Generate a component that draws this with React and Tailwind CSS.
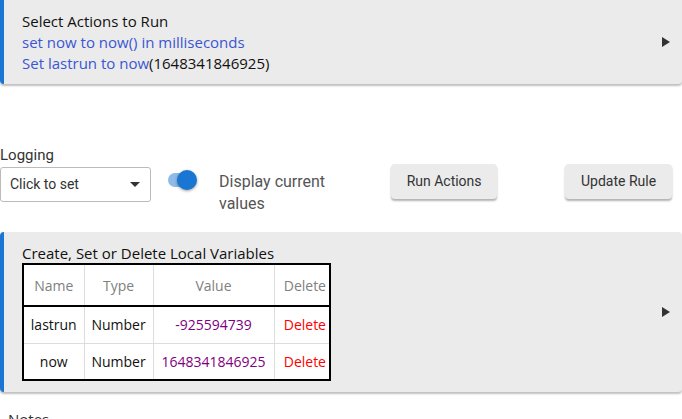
import React from "react";

function Arrow() {
  return (
    <svg width="8" height="10" viewBox="0 0 8 10" className="shrink-0">
      <path d="M0 0 L8 5 L0 10 Z" fill="#333" />
    </svg>
  );
}

const vars = [
  { name: "lastrun", type: "Number", value: "-925594739" },
  { name: "now", type: "Number", value: "1648341846925" },
];

export default function App() {
  return (
    <div className="w-[682px] h-[419px] overflow-hidden bg-white text-[#222]">
      {/* Actions panel */}
      <div className="flex items-center h-[84px] bg-[#ebebeb] rounded-b border-l-4 border-[#1976d2] shadow-[0_2px_2px_rgba(0,0,0,0.25)] pl-[18px] pr-[12px] font-['Open_Sans',sans-serif] text-[15px] leading-[21px]">
        <div className="flex-1 pt-[1px]">
          <div className="text-[#111]">Select Actions to Run</div>
          <div className="text-[#3a56d4]">set now to now() in milliseconds</div>
          <div>
            <span className="text-[#3a56d4]">Set lastrun to now</span>
            <span className="text-[#111]">(1648341846925)</span>
          </div>
        </div>
        <Arrow />
      </div>

      {/* Controls */}
      <div className="mt-[62px] flex items-start font-['Roboto',sans-serif]">
        <div className="w-[151px]">
          <div className="text-[15px] leading-[18px] text-[#333]">Logging</div>
          <div className="mt-[3px] h-[35px] border border-[#bbb] rounded-[3px] flex items-center justify-between pl-[9px] pr-[10px] text-[14px] text-[#333]">
            <span>Click to set</span>
            <svg width="10" height="5" viewBox="0 0 10 5">
              <path d="M0 0 L10 0 L5 5 Z" fill="#333" />
            </svg>
          </div>
        </div>
        <div className="ml-[17px] mt-[24px] relative w-[34px] h-[20px] flex items-center">
          <div className="w-[28px] h-[14px] rounded-full bg-[#8fb9e8]" />
          <div className="absolute left-[9px] top-0 w-[20px] h-[20px] rounded-full bg-[#1976d2] shadow-[0_1px_3px_rgba(0,0,0,0.4)]" />
        </div>
        <div className="ml-[17px] mt-[25px] text-[16px] leading-[22px] text-[#555]">
          Display current
          <br />
          values
        </div>
        <button className="ml-[66px] mt-[18px] w-[106px] h-[35px] bg-[#ebebeb] rounded text-[14px] text-[#333] shadow-[0_2px_2px_rgba(0,0,0,0.3)]">
          Run Actions
        </button>
        <button className="ml-[68px] mt-[18px] w-[107px] h-[35px] bg-[#ebebeb] rounded text-[14px] text-[#333] shadow-[0_2px_2px_rgba(0,0,0,0.3)]">
          Update Rule
        </button>
      </div>

      {/* Variables panel */}
      <div className="mt-[17px] flex items-center bg-[#ebebeb] rounded border-l-4 border-[#1976d2] shadow-[0_2px_2px_rgba(0,0,0,0.25)] pl-[18px] pr-[12px] pt-[11px] pb-[11px] font-['Open_Sans',sans-serif] text-[15px]">
        <div className="flex-1">
          <div className="leading-[20px] text-[#111]">Create, Set or Delete Local Variables</div>
          <table className="border-2 border-black bg-white border-collapse text-center text-[14px]">
            <thead>
              <tr className="h-[42px] border-b-2 border-black text-[#808080]">
                <th className="font-normal w-[61px] border-r border-[#ddd]">Name</th>
                <th className="font-normal w-[69px] border-r border-[#ddd]">Type</th>
                <th className="font-normal w-[121px] border-r border-[#ddd]">Value</th>
                <th className="font-normal w-[56px] text-right pr-[3px]">Delete</th>
              </tr>
            </thead>
            <tbody>
              {vars.map((v, i) => (
                <tr key={v.name} className={i === 0 ? "h-[37px] border-b border-[#ddd]" : "h-[37px]"}>
                  <td className="border-r border-[#ddd] text-[#111]">{v.name}</td>
                  <td className="border-r border-[#ddd] text-[#111]">{v.type}</td>
                  <td className="border-r border-[#ddd] text-[#800080]">{v.value}</td>
                  <td className="text-right pr-[3px] text-[#ff0000]">Delete</td>
                </tr>
              ))}
            </tbody>
          </table>
        </div>
        <Arrow />
      </div>

      <div className="mt-[16px] pl-[8px] font-['Open_Sans',sans-serif] text-[15px] text-[#333]">Notes</div>
    </div>
  );
}
